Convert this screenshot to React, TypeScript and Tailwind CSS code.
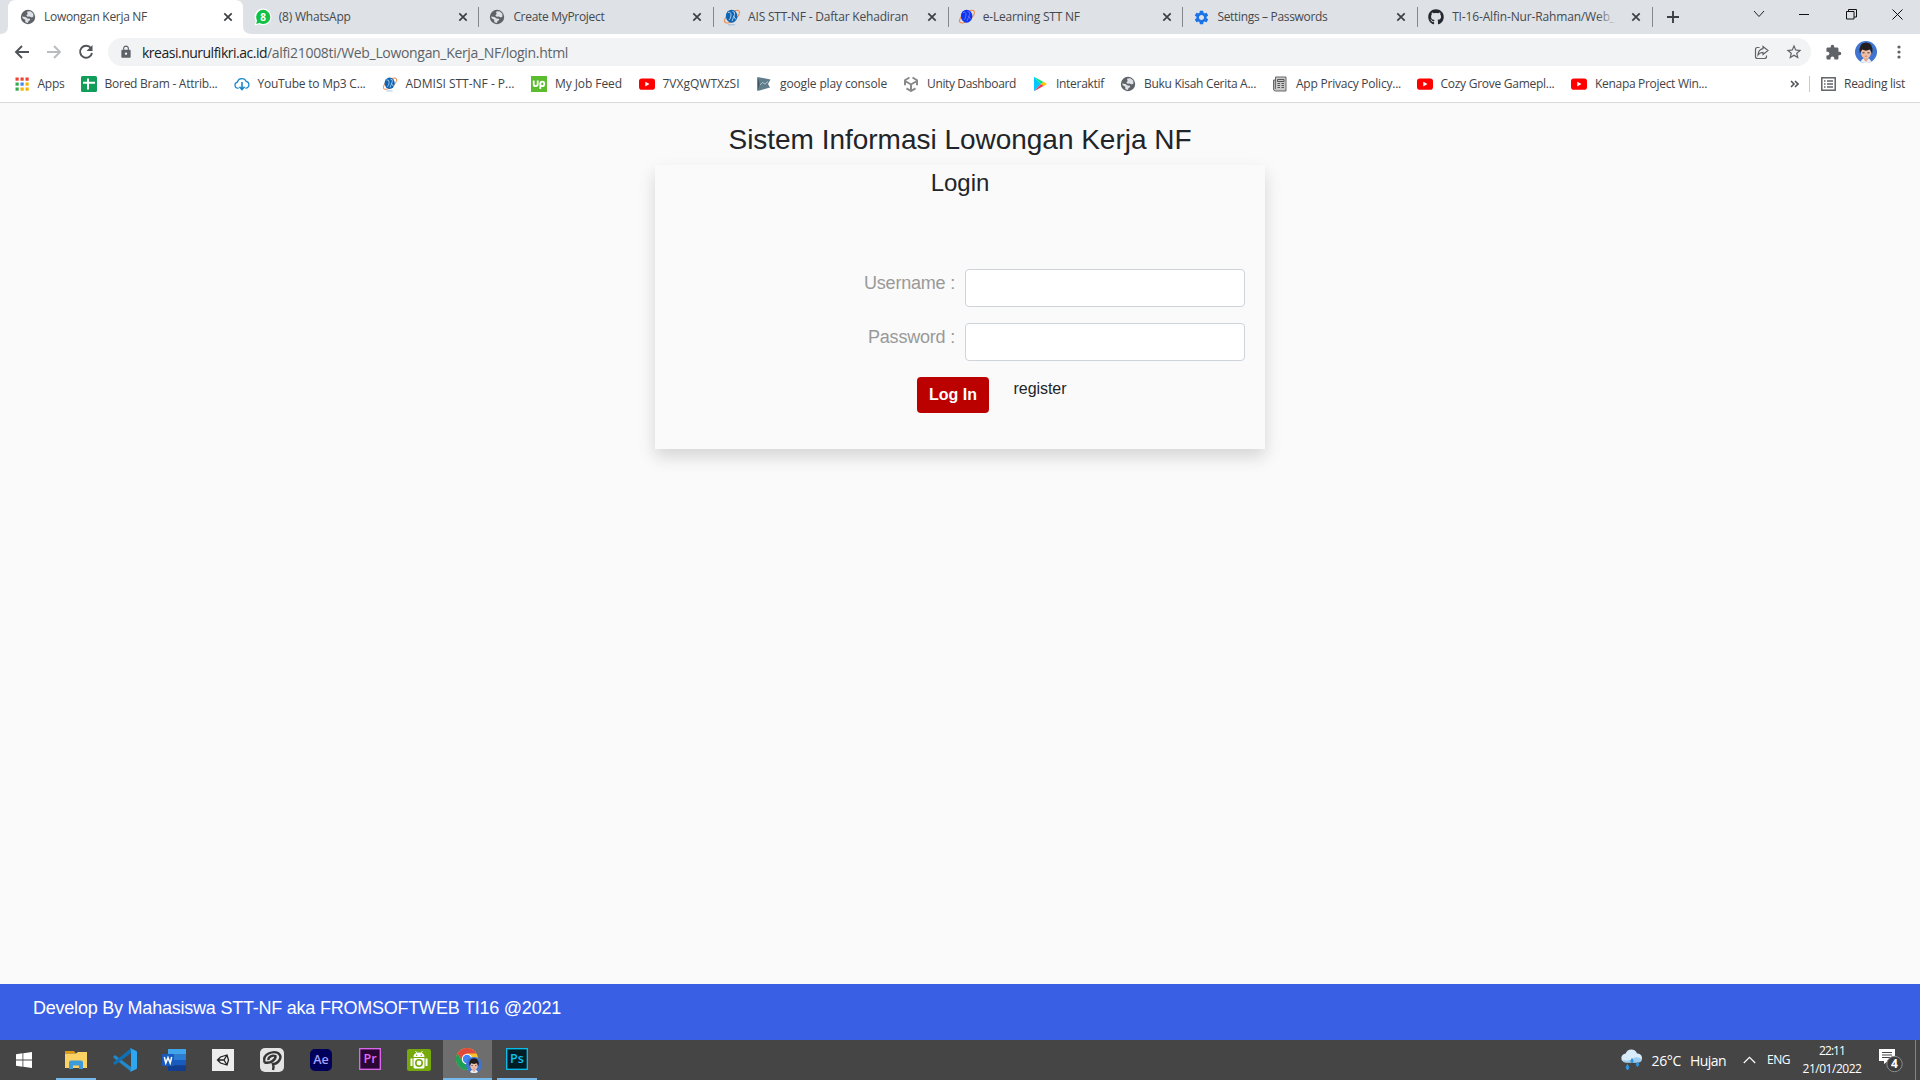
import React, { useLayoutEffect, useRef, useState } from "react";
import { FaGithub } from "react-icons/fa";
import { MdSettings, MdExtension, MdStarBorder, MdLock } from "react-icons/md";

/* Text whose tracking is computed so the line takes exactly `w` pixels. */
function Fit({ w, children, className = "" }: { w: number; children: string; className?: string }) {
  const ref = useRef<HTMLSpanElement>(null);
  const [spacing, setSpacing] = useState(0);
  useLayoutEffect(() => {
    if (ref.current) setSpacing((w - ref.current.getBoundingClientRect().width) / children.length);
  }, [w, children]);
  return (
    <span ref={ref} className={`inline-block whitespace-pre ${className}`} style={{ letterSpacing: `${spacing}px` }}>
      {children}
    </span>
  );
}

const Globe = () => (
  <svg width="16" height="16" viewBox="0 0 16 16">
    <circle cx="8" cy="8" r="7.2" fill="#5f6368" />
    <path d="M7.2 2.5 L10.4 2.2 L13.2 4.6 L13.5 7.6 L11.8 8.4 L9.6 7.4 L7.6 7.8 L6.3 6.3 L7.8 5.1 L7.2 3.9Z" fill="#dee1e6" />
    <path d="M1.9 7.4 L5.6 8 L7.6 9.6 L10 9.8 L10.2 11 L8.4 12.2 L8 14.1 L5.3 13.2 L5.2 10.8 L3 9.6Z" fill="#dee1e6" />
  </svg>
);

const WhatsApp = () => (
  <svg width="18" height="18" viewBox="0 0 18 18">
    <path d="M9 .5a8.4 8.4 0 1 1-4 15.800L.6 17.500l1.300-4.300A8.400 8.400 0 0 1 9 .5z" fill="#fff" />
    <circle cx="9.200" cy="8.900" r="7.100" fill="#0fc144" />
    <path d="M2.200 16l1-4 3 2.800z" fill="#0fc144" />
    <text x="9.200" y="12.600" textAnchor="middle" fontSize="10" fontWeight="700" fontFamily="Open Sans, sans-serif" fill="#fff">8</text>
  </svg>
);

const Nf = ({ dark = false }: { dark?: boolean }) => (
  <svg width="18" height="18" viewBox="-1 0 18 18">
    <ellipse cx="8" cy="8.600" rx="9" ry="4" transform="rotate(-38 8 8.600)" fill="none" stroke="#f08a4b" strokeWidth="1.100" />
    <ellipse cx="7.600" cy="8.200" rx="5.700" ry="6.500" fill={dark ? "#1236ee" : "#0f65b4"} />
    <path d="M4 4.500q3-1 3 2.500t-2 5M8.500 3.500q3 0 2 3T8 13M9.500 8l2.300 3.500" fill="none" stroke={dark ? "#5e7bfa" : "#bcd8ef"} strokeWidth=".9" />
    {!dark && <path d="M4 16.800h7" stroke="#8fb2d4" strokeWidth=".8" />}
  </svg>
);

const AppsGrid = () => (
  <svg width="14" height="14" viewBox="0 0 14 14">
    {["#ea4335", "#ea4335", "#ea4335", "#34a853", "#4285f4", "#f4b400", "#34a853", "#f4b400", "#f4b400"].map((c, i) => (
      <rect key={i} x={(i % 3) * 5 + 0.500} y={Math.floor(i / 3) * 5 + 0.500} width="3.200" height="3.200" fill={c} />
    ))}
  </svg>
);

const Sheets = () => (
  <svg width="16" height="16" viewBox="0 0 16 16">
    <rect width="16" height="16" rx="1.500" fill="#0f9d58" />
    <path d="M7 2.500v11M2 6.800h12" stroke="#fff" strokeWidth="2" />
  </svg>
);

const Cloud = () => (
  <svg width="17" height="16" viewBox="0 0 17 16" fill="none" stroke="#1888cc" strokeWidth="1.300">
    <path d="M5 12.500H4a3.300 3.300 0 0 1-.4-6.500A5 5 0 0 1 13 5.300a3.700 3.700 0 0 1 0 7.200h-1" />
    <path d="M8.500 6v7.500M5.800 11l2.700 3 2.700-3" strokeWidth="1.700" />
  </svg>
);

const Upwork = () => (
  <svg width="16" height="16" viewBox="0 0 16 16">
    <rect width="16" height="16" fill="#5bbc2e" />
    <path d="M2.700 4.500v3.700q0 2 2 2t2-2V4.500M9.300 13V8q0-2.300 2-2.300t2 2.200-2 2.300q-1.700 0-2-2" fill="none" stroke="#fff" strokeWidth="1.800" />
  </svg>
);

const YouTube = () => (
  <svg width="16" height="16" viewBox="0 0 16 16">
    <rect y="2.500" width="16" height="11.200" rx="2.800" fill="#f00" />
    <path d="M6.300 5.700v4.800l4.200-2.400z" fill="#fff" />
  </svg>
);

const Console = () => (
  <svg width="16" height="16" viewBox="0 0 16 16">
    <path d="M1.500 1L14.500 3.500 12 8l2 3.500L1.500 15z" fill="#607d8b" />
    <path d="M1.500 1l2 7-2 7z" fill="#37515f" />
    <path d="M4 9l2.500-2.500L9 8l3-2.500" fill="none" stroke="#c4d2d9" strokeWidth=".8" />
  </svg>
);

const Unity = () => (
  <svg width="16" height="16" viewBox="0 0 16 16" fill="none" stroke="#8a8a8a" strokeWidth="2">
    <path d="M6.500 1.500L2 4.200v5M9.500 1.500L14 4.200v5M3.500 12.300L8 15l4.500-2.700M8 15V8.500M8 8.500L3 5.500M8 8.500l5-3" />
  </svg>
);

const Play = () => (
  <svg width="16" height="16" viewBox="0 0 16 16">
    <path d="M2 .8v14.400L9 8z" fill="#00c8ff" />
    <path d="M2 .8L11.500 6 9 8z" fill="#00e676" />
    <path d="M11.500 5.800L15 8l-3.500 2.200L9 8z" fill="#ffc400" />
    <path d="M2 15.200L11.500 10 9 8z" fill="#f43b50" />
  </svg>
);

const Paper = () => (
  <svg width="16" height="16" viewBox="0 0 16 16">
    <path d="M3.500 1H14v14H3.500q-2 0-2-2V4h2z" fill="#c9c9c9" stroke="#666" />
    <path d="M5.500 3.500h6.500v2H5.500zM5.500 7.500H8M9.500 7.500H12M5.500 9.500H8M9.500 9.500H12M5.500 11.500H8M9.500 11.500H12M3.300 4v9" fill="none" stroke="#555" />
  </svg>
);

const Avatar = ({ size }: { size: number }) => (
  <svg width={size} height={size} viewBox="0 0 22 22">
    <circle cx="11" cy="11" r="11" fill="#3f75cf" />
    <path d="M5.500 20.500L8 17.500h6l2.500 3A11 11 0 0 1 5.500 20.500z" fill="#eef2f8" />
    <path d="M9 15h4v4l-2 2-2-2z" fill="#e5a98c" />
    <ellipse cx="11" cy="12" rx="5" ry="5.500" fill="#f0bfa5" />
    <path d="M4.800 12.500Q3 2 11 1.600 19 2 17.200 12.500L16 10.500l-1-2-4 1.200-4-1.200-1 2z" fill="#221e20" />
    <path d="M7.500 11.800h2M12.500 11.800h2" stroke="#333" />
    <path d="M9.800 15.200h2.400" stroke="#c76f5f" strokeWidth=".8" />
  </svg>
);

const Close = () => (
  <svg width="10" height="10" viewBox="0 0 10 10" stroke="#3c4043" strokeWidth="1.700">
    <path d="M1.300 1.300l7.400 7.400M8.700 1.300L1.300 8.700" />
  </svg>
);

const tabs: { icon: React.ReactNode; text: string; w: number }[] = [
  { icon: <Globe />, text: "Lowongan Kerja NF", w: 103 },
  { icon: <WhatsApp />, text: "(8) WhatsApp", w: 72 },
  { icon: <Globe />, text: "Create MyProject", w: 91 },
  { icon: <Nf />, text: "AIS STT-NF - Daftar Kehadiran", w: 160 },
  { icon: <Nf dark />, text: "e-Learning STT NF", w: 97 },
  { icon: <MdSettings size={17} color="#1a73e8" />, text: "Settings – Passwords", w: 110 },
  { icon: <FaGithub size={16} color="#24292f" />, text: "TI-16-Alfin-Nur-Rahman/Web_Lo", w: 176 },
];

const bookmarks: { icon: React.ReactNode; text: string; w: number; cell: string }[] = [
  { icon: <AppsGrid />, text: "Apps", w: 27, cell: "w-[67px]" },
  { icon: <Sheets />, text: "Bored Bram - Attrib...", w: 113, cell: "w-[153px]" },
  { icon: <Cloud />, text: "YouTube to Mp3 C...", w: 108, cell: "w-[148px]" },
  { icon: <Nf />, text: "ADMISI STT-NF - P...", w: 109, cell: "w-[149.5px]" },
  { icon: <Upwork />, text: "My Job Feed", w: 67, cell: "w-[107.5px]" },
  { icon: <YouTube />, text: "7VXgQWTXzSI", w: 77, cell: "w-[117.5px]" },
  { icon: <Console />, text: "google play console", w: 107, cell: "w-[147px]" },
  { icon: <Unity />, text: "Unity Dashboard", w: 89, cell: "w-[129px]" },
  { icon: <Play />, text: "Interaktif", w: 48, cell: "w-[88px]" },
  { icon: <Globe />, text: "Buku Kisah Cerita A...", w: 112, cell: "w-[152px]" },
  { icon: <Paper />, text: "App Privacy Policy...", w: 105, cell: "w-[144.5px]" },
  { icon: <YouTube />, text: "Cozy Grove Gamepl...", w: 114, cell: "w-[154.5px]" },
  { icon: <YouTube />, text: "Kenapa Project Win...", w: 112, cell: "w-[140px]" },
];

function TabStrip() {
  return (
    <div className="flex h-[34px] bg-[#dee1e6] pl-[9px]">
      {tabs.map((t, i) => (
        <div key={t.text} className="relative flex h-[34px] w-[234.7px] shrink-0 items-center">
          {i === 0 && (
            <svg className="absolute -left-[9px] top-0" width="254" height="34" viewBox="0 0 254 34">
              <path d="M0 34q8 0 8-8V8q0-8 8-8H235q8 0 8 8v18q0 8 9 8z" fill="#fff" />
            </svg>
          )}
          <div className="relative ml-[10px] flex w-[18px] justify-center">{t.icon}</div>
          <div className="relative ml-[7px] w-[173px] overflow-hidden text-[12px] leading-[18px] text-[#45494d]">
            <Fit w={t.w}>{t.text}</Fit>
            {i === 6 && <div className="absolute right-0 top-0 h-full w-7 bg-gradient-to-r from-[#dee1e6]/0 to-[#dee1e6] to-70%" />}
          </div>
          <div className="relative ml-[6px]"><Close /></div>
          {i > 0 && <div className="absolute -right-px top-[7px] h-5 w-px bg-[#85888c]" />}
        </div>
      ))}
      <svg className="ml-[14px] mt-[10px]" width="14" height="14" viewBox="0 0 14 14"><path d="M7 1v12M1 7h12" stroke="#3c4043" strokeWidth="1.900" /></svg>
      <svg className="ml-[73px] mt-[9px]" width="12" height="10" viewBox="0 0 12 10" fill="none" stroke="#222"><path d="M1 2l5 5.500L11 2" /></svg>
      <svg className="ml-[34px] mt-[9px]" width="11" height="10" viewBox="0 0 11 10"><path d="M0 5.500h10" stroke="#111" /></svg>
      <svg className="ml-[36px] mt-[9px]" width="11" height="11" viewBox="0 0 11 11" fill="none" stroke="#111"><path d="M.5 2.500h7.500v7.500H.5zM2.500 2.500v-2h8v7.500h-2.500" /></svg>
      <svg className="ml-[35px] mt-[9px]" width="11" height="11" viewBox="0 0 11 11" stroke="#111"><path d="M.5.5l10 10M10.500.5l-10 10" /></svg>
    </div>
  );
}

function Toolbar() {
  return (
    <div className="flex h-[36px] items-center bg-white">
      <svg className="ml-[14px]" width="16" height="14" viewBox="0 0 16 14" fill="none" stroke="#505459" strokeWidth="1.900"><path d="M15 7H2M8 1L2 7l6 6" /></svg>
      <svg className="ml-[16px]" width="16" height="14" viewBox="0 0 16 14" fill="none" stroke="#babcbe" strokeWidth="1.900"><path d="M1 7h13M8 1l6 6-6 6" /></svg>
      <svg className="ml-[16px]" width="16" height="16" viewBox="0 0 16 16"><path d="M13 4.300A6 6 0 1 0 14 9" fill="none" stroke="#505459" strokeWidth="1.900" /><path d="M14.500 1v6h-6z" fill="#505459" /></svg>
      <div className="ml-[14px] flex h-7 w-[1703px] items-center rounded-full bg-[#f1f3f4]">
        <MdLock className="ml-[11px]" size={14} color="#5f6368" />
        <div className="ml-[9px] pt-px text-[14px] leading-5 text-[#5f6368]">
          <Fit w={125} className="text-[#202124]">kreasi.nurulfikri.ac.id</Fit>
          <Fit w={301}>/alfi21008ti/Web_Lowongan_Kerja_NF/login.html</Fit>
        </div>
        <svg className="ml-auto" width="15" height="15" viewBox="0 0 15 15" fill="none" stroke="#5f6368" strokeWidth="1.200"><path d="M5.500 2.500h-2q-2 0-2 2v7q0 2 2 2h7q2 0 2-2v-1" /><path d="M9 1.500l5 4-5 4V7.300q-3 0-5 2.700.4-5.500 5-6.300z" /></svg>
        <MdStarBorder className="ml-[16px] mr-[8px]" size={18} color="#5f6368" />
      </div>
      <MdExtension className="ml-[14px]" size={17} color="#5f6368" />
      <div className="ml-[13px]"><Avatar size={22} /></div>
      <svg className="ml-[20px]" width="4" height="14" viewBox="0 0 4 14" fill="#5f6368"><circle cx="2" cy="2" r="1.600" /><circle cx="2" cy="7" r="1.600" /><circle cx="2" cy="12" r="1.600" /></svg>
    </div>
  );
}

function Bookmarks() {
  return (
    <div className="flex h-[33px] items-center border-b border-[#d9dadc] bg-white pb-[4px] pl-[13.5px] text-[12px] leading-[18px] text-[#3f4347]">
      {bookmarks.map((b) => (
        <div key={b.text} className={`flex shrink-0 items-center ${b.cell}`}>
          <div className="mr-2 flex w-4 shrink-0 justify-center">{b.icon}</div>
          <Fit w={b.w}>{b.text}</Fit>
        </div>
      ))}
      <svg className="ml-[79px]" width="9" height="8" viewBox="0 0 9 8" fill="none" stroke="#505459" strokeWidth="1.600"><path d="M1 1l3 3-3 3M5 1l3 3-3 3" /></svg>
      <div className="ml-[10px] h-4 w-px bg-[#c8cacd]" />
      <svg className="ml-[11px] mr-[8px]" width="15" height="14" viewBox="0 0 15 14" fill="none" stroke="#5f6368" strokeWidth="1.500"><rect x=".8" y=".8" width="13.400" height="12.400" /><path d="M3 4h1.500M6 4h6M3 7h1.500M6 7h6M3 10h1.500M6 10h6" strokeWidth="1.300" /></svg>
      <Fit w={61}>Reading list</Fit>
    </div>
  );
}

function Field({ label, w, type }: { label: string; w: number; type: string }) {
  return (
    <div className="mb-4 flex h-[38px] justify-end pr-5">
      <label className="mr-[10px] pt-[1px] text-[18px] leading-[27px] text-[#999]"><Fit w={w}>{label}</Fit></label>
      <input type={type} className="h-[38px] w-[280px] rounded border border-[#ced4da] bg-white px-3" />
    </div>
  );
}

function LoginPage() {
  return (
    <main className="flex h-[881px] flex-col items-center bg-[#fafafa] font-['Liberation_Sans',Arial,sans-serif] text-[#212529]">
      <h1 className="mt-[20px] h-[42px] text-[28px] leading-[34px]"><Fit w={463}>Sistem Informasi Lowongan Kerja NF</Fit></h1>
      <section className="h-[284px] w-[610px] bg-[#fafafa] shadow-[0_8px_16px_rgba(0,0,0,0.15)]">
        <h2 className="h-[104px] pt-[3px] text-center text-[24px] leading-[29px]"><Fit w={58.5}>Login</Fit></h2>
        <Field label="Username :" w={91} type="text" />
        <Field label="Password :" w={87} type="password" />
        <div className="flex pl-[262px] text-[16px] leading-6">
          <button className="h-9 w-[72px] rounded bg-[#bb0000] font-bold text-white"><Fit w={48}>Log In</Fit></button>
          <a className="ml-[24.500px]"><Fit w={53}>register</Fit></a>
        </div>
      </section>
    </main>
  );
}

const Adobe = ({ t, bg, fg, border }: { t: string; bg: string; fg: string; border: boolean }) => (
  <svg className={border ? "-mt-0.5" : ""} width="22" height="22" viewBox="0 0 22 22">
    <rect x=".7" y=".7" width="20.600" height="20.600" rx={border ? 0 : 4} fill={bg} stroke={border ? fg : bg} strokeWidth="1.300" />
    <text x="11" y="15.300" textAnchor="middle" fontSize="12.500" fontWeight="600" fontFamily="Open Sans, sans-serif" fill={fg}>{t}</text>
  </svg>
);

const taskIcons: { icon: React.ReactNode; open?: boolean; active?: boolean }[] = [
  {
    open: true,
    icon: (
      <svg width="22" height="20" viewBox="0 0 22 20">
        <path d="M0 1h9l2 2.500H0z" fill="#e09a09" /><path d="M0 3.500h11l2-1.500h9v16H0z" fill="#fdd264" />
        <path d="M4 19v-6.500q0-2 2-2h10q2 0 2 2V19h-4v-3.500H8V19z" fill="#3d9bdc" />
      </svg>
    ),
  },
  {
    icon: (
      <svg width="24" height="24" viewBox="0 0 24 24">
        <path d="M.5 8.500L2 7l16 12v4.500L.5 9.700z" fill="#2489ca" /><path d="M.5 15.500L2 17 18 5V.3L.5 14.300z" fill="#1070b3" />
        <path d="M17 0l6 2.800q1 .5 1 1.500v15.400q0 1-1 1.500L17 24l1-2V2z" fill="#2fa7ee" />
      </svg>
    ),
  },
  {
    icon: (
      <svg width="24" height="22" viewBox="0 0 24 22">
        <rect x="6" y="0" width="18" height="5.600" fill="#41a5ee" /><rect x="6" y="5.500" width="18" height="5.600" fill="#2b7cd3" />
        <rect x="6" y="11" width="18" height="5.600" fill="#185abd" /><rect x="6" y="16.400" width="18" height="5.600" fill="#103f91" />
        <rect y="5" width="12" height="12" rx="1" fill="#185abd" /><path d="M2.300 8l1.500 6L6 8.600 8.200 14l1.500-6" fill="none" stroke="#fff" strokeWidth="1.500" />
      </svg>
    ),
  },
  {
    icon: (
      <svg width="22" height="22" viewBox="0 0 22 22">
        <rect width="22" height="22" fill="#ededed" />
        <path d="M5.500 11l3-3L15 6l1.500 5-1.500 5-6.500-2zM5.500 11H12M12 11l3-5M12 11l3 5" fill="none" stroke="#222" strokeWidth="1.300" />
      </svg>
    ),
  },
  {
    icon: (
      <svg width="24" height="24" viewBox="0 0 24 24">
        <rect width="24" height="24" rx="5" fill="#e4e4e4" />
        <path d="M4.500 14.500Q3 8 8.500 5.500T18 5q4 3 1.500 7t-6.500 4q1 2.500 0 6M4.500 14.500q4.500 1 8-1.500t3-5q-2.500-1-5 .5T8.500 12" fill="none" stroke="#353535" strokeWidth="2.400" />
      </svg>
    ),
  },
  { icon: <Adobe t="Ae" bg="#00005b" fg="#a3a3ff" border={false} /> },
  { icon: <Adobe t="Pr" bg="#2a0634" fg="#e36bf5" border /> },
  {
    icon: (
      <svg width="24" height="22" viewBox="0 0 24 22">
        <rect width="24" height="22" rx="2" fill="#76a90b" />
        <path d="M6.500 8q0-4.500 5.500-4.500T17.500 8zM6.500 9h11v9q0 1.500-1.500 1.500H8q-1.500 0-1.500-1.500zM3.500 9.500h2V17h-2zM18.500 9.500h2V17h-2z" fill="#fff" />
        <circle cx="12" cy="14" r="3.200" fill="none" stroke="#76a90b" strokeWidth="1.600" /><circle cx="9.700" cy="6.200" r=".7" fill="#76a90b" /><circle cx="14.300" cy="6.200" r=".7" fill="#76a90b" />
        <path d="M8.500 2l1.300 2M15.500 2l-1.300 2" stroke="#fff" strokeWidth=".8" />
      </svg>
    ),
  },
  {
    open: true,
    active: true,
    icon: (
      <div className="relative h-6 w-6">
        <svg width="22" height="22" viewBox="0 0 22 22">
          <circle cx="11" cy="11" r="11" fill="#fbc02d" />
          <path d="M1.470 5.500A11 11 0 0 1 20.500 5.500H11L6.500 13.500z" fill="#df4a3d" />
          <path d="M1.470 5.500A11 11 0 0 0 11 22l5-8.500H6.500z" fill="#1e9e57" />
          <circle cx="11" cy="11" r="5.200" fill="#fff" /><circle cx="11" cy="11" r="4.200" fill="#4285f4" />
        </svg>
        <div className="absolute left-[10px] top-[9px]"><Avatar size={16} /></div>
      </div>
    ),
  },
  { open: true, icon: <Adobe t="Ps" bg="#001d26" fg="#08c4f2" border /> },
];

function Taskbar() {
  return (
    <div className="flex h-10 bg-[#454545] text-white">
      <div className="flex w-[51px] items-center pl-4">
        <svg width="16" height="16" viewBox="0 0 16 16" fill="#fff"><path d="M0 2.200L6.500 1.300v6.200H0zM7.300 1.200L16 0v7.500H7.300zM0 8.400h6.500v6.300L0 13.800zM7.300 8.400H16V16l-8.700-1.200z" /></svg>
      </div>
      {taskIcons.map((t, i) => (
        <div key={i} className={`relative flex h-10 w-[49px] items-center justify-center ${t.active ? "bg-[#6e6e6e]" : ""}`}>
          {t.icon}
          {t.open && <div className={`absolute bottom-0 h-[2px] bg-[#76b9ed] ${t.active ? "w-full" : "w-10"}`} />}
        </div>
      ))}
      <div className="ml-auto flex items-center">
        <svg width="22" height="22" viewBox="0 0 22 22">
          <path d="M5 13.500a4.500 4.500 0 0 1-.3-9A6 6 0 0 1 16 4.500a4.500 4.500 0 0 1 1 9z" fill="#d8ecfa" />
          <path d="M5 13.500a4.500 4.500 0 0 1-3.500-2.500q8 1.500 12-2.500 4-1 7.500 2a4 4 0 0 1-4 3z" fill="#9ccbed" />
          <path d="M11 9.500q2.500 3 0 4.500-2.500-1.500 0-4.500zM16.500 13q2.500 3 0 4.500-2.500-1.500 0-4.500zM6.500 15.500q3 3.500 0 5.500-3-2 0-5.500z" fill="#2e94dd" stroke="#2e94dd" />
        </svg>
        <div className="ml-[9px] pt-px text-[14px] leading-5"><Fit w={29.500}>26°C</Fit></div>
        <div className="ml-[9px] pt-px text-[14px] leading-5"><Fit w={36}>Hujan</Fit></div>
        <svg className="ml-[17px]" width="13" height="8" viewBox="0 0 13 8" fill="none" stroke="#fff" strokeWidth="1.200"><path d="M.8 7l5.700-5.700L12.200 7" /></svg>
        <div className="ml-[11px] text-[12px] leading-5"><Fit w={23}>ENG</Fit></div>
        <div className="ml-[12px] flex w-[60px] flex-col items-center text-[12px] leading-[18px]">
          <Fit w={26}>22:11</Fit>
          <Fit w={59}>21/01/2022</Fit>
        </div>
        <svg className="ml-[16px]" width="26" height="26" viewBox="0 0 26 26">
          <path d="M1 2h16v12h-7l-4 3v-3H1z" fill="#fff" /><path d="M4 5.500h10M4 8h10M4 10.500h10" stroke="#454545" strokeWidth="1.100" />
          <circle cx="16.500" cy="17" r="7.700" fill="#3c3c3c" stroke="#8c8c8c" />
          <text x="16.500" y="21.300" textAnchor="middle" fontSize="12" fontWeight="700" fontFamily="Open Sans, sans-serif" fill="#fff">4</text>
        </svg>
        <div className="ml-[11px] h-10 w-px bg-[#858585]" />
        <div className="w-1" />
      </div>
    </div>
  );
}

export default function App() {
  return (
    <div className="flex h-[1080px] w-[1920px] flex-col overflow-hidden font-['Open_Sans',sans-serif]">
      <TabStrip />
      <Toolbar />
      <Bookmarks />
      <LoginPage />
      <footer className="h-14 bg-[#395fe5] pl-[33px] pt-[11px] font-['Liberation_Sans',Arial,sans-serif] text-[18px] leading-[27px] text-white">
        <Fit w={528}>Develop By Mahasiswa STT-NF aka FROMSOFTWEB TI16 @2021</Fit>
      </footer>
      <Taskbar />
    </div>
  );
}
